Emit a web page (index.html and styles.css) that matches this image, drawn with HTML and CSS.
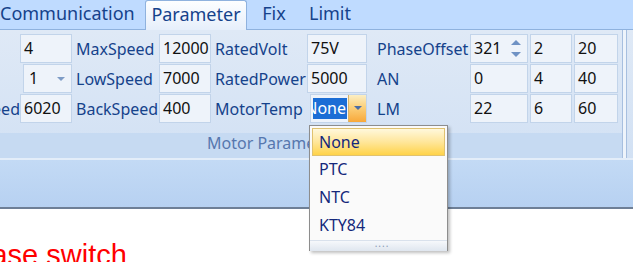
FILE: index.html
```html
<!DOCTYPE html>
<html lang="en">
<head>
    <meta charset="UTF-8">
    <title>Parameter</title>
    <link rel="stylesheet" href="styles.css">
</head>
<body>
    <div class="tabs">
        <div class="tab tab-comm">Communication</div>
        <div class="tab tab-param active">Parameter</div>
        <div class="tab tab-fix">Fix</div>
        <div class="tab tab-limit">Limit</div>
    </div>

    <div class="ribbon">
        <div class="group">
            <div class="fields">
                <!-- row 1 -->
                <div class="lbl clip"><span>Poles</span></div>
                <div class="box">4</div>
                <div class="lbl">MaxSpeed</div>
                <div class="box">12000</div>
                <div class="lbl">RatedVolt</div>
                <div class="box">75V</div>
                <div class="lbl lbl-wide">PhaseOffset</div>
                <div class="box box-spin">321
                    <span class="spin">
                        <span class="spin-up"></span>
                        <span class="spin-down"></span>
                    </span>
                </div>
                <div class="box box-s">2</div>
                <div class="box">20</div>
                <!-- row 2 -->
                <div class="lbl clip"><span>Type</span></div>
                <div class="box combo">1<span class="arrow"></span></div>
                <div class="lbl">LowSpeed</div>
                <div class="box">7000</div>
                <div class="lbl">RatedPower</div>
                <div class="box">5000</div>
                <div class="lbl lbl-wide">AN</div>
                <div class="box box-spin-w">0</div>
                <div class="box box-s">4</div>
                <div class="box">40</div>
                <!-- row 3 -->
                <div class="lbl clip"><span>RatedSpeed</span></div>
                <div class="box">6020</div>
                <div class="lbl">BackSpeed</div>
                <div class="box">400</div>
                <div class="lbl">MotorTemp</div>
                <div class="box combo combo-open">
                    <span class="sel"><span>None</span></span>
                    <span class="drop-btn"></span>
                </div>
                <div class="lbl lbl-wide">LM</div>
                <div class="box box-spin-w">22</div>
                <div class="box box-s">6</div>
                <div class="box">60</div>
            </div>
            <div class="group-label">Motor Parameter</div>
        </div>
        <div class="group-sep"></div>
        <div class="group next"></div>
    </div>

    <div class="bar"></div>

    <p class="note">Phase switch</p>

    <ul class="dropdown">
        <li class="hover">None</li>
        <li>PTC</li>
        <li>NTC</li>
        <li>KTY84</li>
        <li class="grip">....</li>
    </ul>
</body>
</html>
```
FILE: styles.css
```css
*{
    margin: 0;
    padding: 0;
    box-sizing: border-box;
}
ul{
    list-style: none;
}
body{
    width: 633px;
    height: 262px;
    overflow: hidden;
    position: relative;
    background: #fff;
    font-family: "Noto Sans", "Open Sans", sans-serif;
}

/* tabs */
.tabs{
    display: flex;
    height: 30px;
    background: #bfdbff;
    border-bottom: 1px solid #8fb2de;
}
.tab{
    height: 29px;
    line-height: 27px;
    font-size: 18px;
    color: #15428b;
    text-align: center;
    white-space: nowrap;
}
.tab-comm{
    width: 145px;
    text-align: right;
    padding-right: 20px;
}
.tab-param{
    width: 102px;
    height: 30px;
    background: linear-gradient(#fdfeff, #e6effb);
    border: 1px solid #8fb2de;
    border-bottom: none;
    border-radius: 3px 3px 0 0;
}
.tab-fix{
    width: 54px;
}
.tab-limit{
    width: 58px;
}

/* ribbon */
.ribbon{
    display: flex;
    height: 128px;
    background: #d3e2f4;
}
.group{
    width: 622px;
    display: flex;
    flex-direction: column;
    background: linear-gradient(#dfe9f6, #d2e1f4);
}
.fields{
    display: grid;
    grid-template-columns: 20px 52px 87px 52px 96px 60px 103px 60px 44px 44px;
    grid-template-rows: 30px 30px 30px;
    margin-top: 4px;
    height: 99px;
    font-size: 16px;
}
.lbl{
    line-height: 30px;
    padding-left: 4px;
    color: #15428b;
    white-space: nowrap;
}
.lbl-wide{
    padding-left: 10px;
}
.clip{
    display: flex;
    justify-content: flex-end;
    overflow: hidden;
    padding-left: 0;
}
.clip span{
    visibility: hidden;
}
.fields .clip:nth-child(21) span{
    visibility: visible;
}
.box{
    height: 29px;
    line-height: 27px;
    padding-left: 3px;
    background: #eef3fa;
    border: 1px solid #c2d4ea;
    color: #111;
    position: relative;
}
.box-spin,
.box-spin-w,
.box-s{
    margin-right: 2px;
}
.combo{
    margin-left: 3px;
    padding-left: 5px;
}
.arrow{
    position: absolute;
    right: 6px;
    top: 12px;
    border-left: 4px solid transparent;
    border-right: 4px solid transparent;
    border-top: 4px solid #7e9cc6;
}
.spin{
    position: absolute;
    right: 1px;
    top: 1px;
    width: 22px;
    height: 26px;
    display: flex;
    flex-direction: column;
}
.spin span{
    flex: 1;
    position: relative;
}
.spin-up:after,
.spin-down:after{
    content: "";
    position: absolute;
    left: 7px;
    border-left: 5px solid transparent;
    border-right: 5px solid transparent;
}
.spin-up:after{
    top: 4px;
    border-bottom: 5px solid #6f92c4;
}
.spin-down:after{
    top: 3px;
    border-top: 5px solid #6f92c4;
}
.combo-open{
    display: flex;
    align-items: center;
    padding-left: 2px;
    padding-right: 0;
    margin-left: 3px;
    border-color: #c2d4ea;
}
.sel{
    display: flex;
    justify-content: flex-end;
    overflow: hidden;
    width: 34px;
    height: 21px;
    line-height: 20px;
    background: #1b6dd5;
    color: #fff;
}
.sel span{
    flex-shrink: 0;
    padding-right: 1px;
}
.drop-btn{
    margin-left: auto;
    width: 18px;
    height: 27px;
    background: linear-gradient(#fbeec4, #fbd07a 45%, #f8a83a);
    border-left: 1px solid #d8b36a;
    position: relative;
}
.drop-btn:after{
    content: "";
    position: absolute;
    left: 5px;
    top: 11px;
    border-left: 4px solid transparent;
    border-right: 4px solid transparent;
    border-top: 4px solid #4b6da5;
}
.group-label{
    height: 25px;
    margin-top: auto;
    background: #c6daf2;
    padding-left: 207px;
    font-size: 16px;
    line-height: 20px;
    color: #5677ae;
}
.group-sep{
    width: 5px;
    border-left: 1px solid #a7bfdf;
    border-right: 1px solid #a7bfdf;
    background: #eef4fb;
}
.next{
    flex: 1;
}

/* lower bar */
.bar{
    height: 51px;
    border-top: 2px solid #e3edf9;
    border-bottom: 2px solid #6e7f96;
    background: linear-gradient(#c3daf5, #b7d1f1);
}

.note{
    margin-top: 30px;
    margin-left: -44px;
    font-family: "Liberation Sans", Arial, sans-serif;
    font-size: 29px;
    color: #ff0000;
    white-space: nowrap;
}

/* open combo list */
.dropdown{
    position: absolute;
    left: 309px;
    top: 125px;
    width: 139px;
    height: 126px;
    padding: 2px 2px 0;
    background: #fafafa;
    border: 1px solid #8d8d8d;
    box-shadow: 2px 2px 3px rgba(0, 0, 0, 0.25);
    font-size: 16px;
    color: #15287b;
}
.dropdown li{
    height: 28px;
    line-height: 27px;
    padding-left: 7px;
}
.dropdown .hover{
    background: linear-gradient(#fff8dc, #ffe69a 50%, #ffd349);
    border: 1px solid #e0c270;
    padding-left: 6px;
}
.dropdown .grip{
    height: 11px;
    margin: 0 -2px;
    line-height: 4px;
    font-size: 10px;
    text-align: center;
    color: #8a9ab4;
    letter-spacing: 1px;
    border-top: 1px solid #d9e1ec;
    background: linear-gradient(#f6f8fb, #dfe6ef);
}
```
